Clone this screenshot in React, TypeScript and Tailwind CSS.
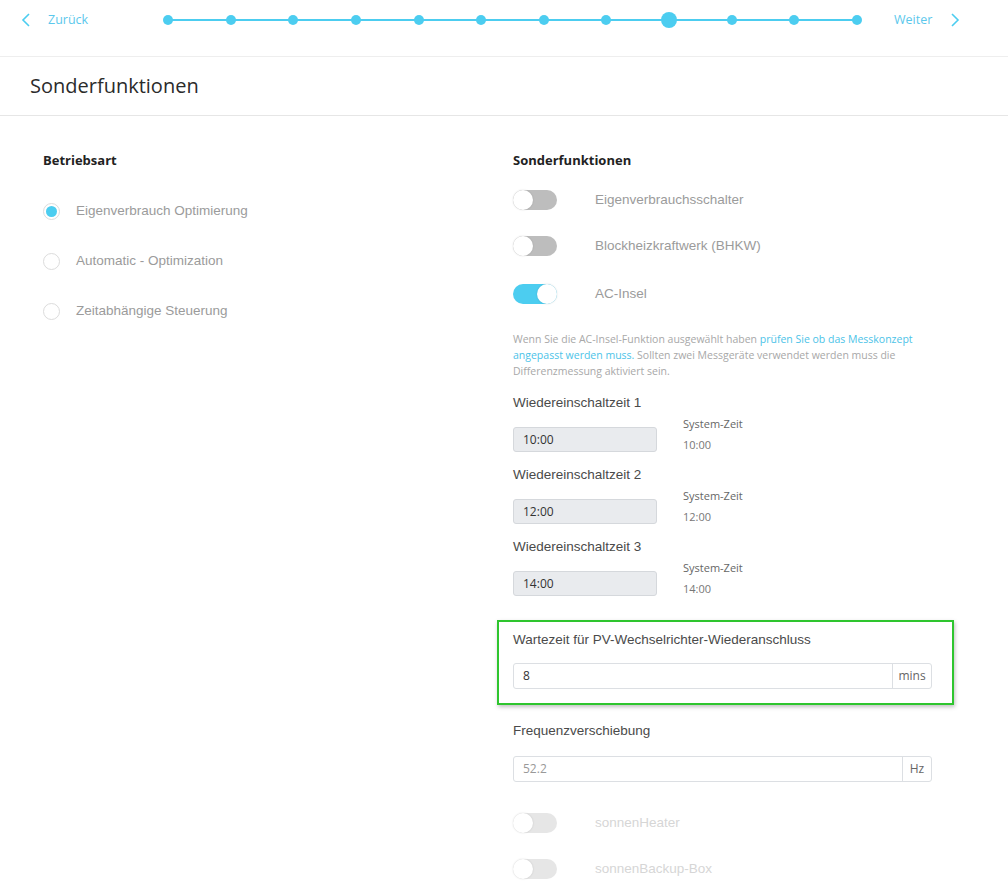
const segoe = { fontFamily: '"Open Sans", "Noto Sans", sans-serif' };
const arial = { fontFamily: '"Liberation Sans", Arial, sans-serif' };

const steps = [0, 1, 2, 3, 4, 5, 6, 7, 8, 9, 10, 11];
const current = 8;

const Toggle = ({ on = false, disabled = false }: { on?: boolean; disabled?: boolean }) => {
  const track = on ? "bg-[#4ccdf0]" : disabled ? "bg-[#e6e6e6]" : "bg-[#bdbdbd]";
  return (
    <div className={`relative flex h-[20px] w-[44px] shrink-0 items-center rounded-full ${track} ${on ? "justify-end" : "justify-start"}`}>
      <div className="h-[20px] w-[20px] rounded-full bg-white shadow-[0_0_2px_rgba(0,0,0,0.15)]" />
    </div>
  );
};

const Radio = ({ checked = false }: { checked?: boolean }) => (
  <div className="flex h-[17px] w-[17px] shrink-0 items-center justify-center rounded-full border border-[#dcdcdc] bg-white">
    {checked && <div className="h-[11px] w-[11px] rounded-full bg-[#4ccdf0]" />}
  </div>
);

const TimeRow = ({ label, value, first = false }: { label: string; value: string; first?: boolean }) => (
  <div className={first ? "mt-[14px]" : "mt-[13px]"}>
    <div className="h-[20px] text-[13.5px] leading-[20px] text-[#4a4a4a]" style={arial}>
      {label}
    </div>
    <div className="mt-[4px] flex">
      <div
        className="mt-[10px] flex h-[25px] w-[144px] items-center rounded-[3px] border border-[#d5d8dc] bg-[#e9ebee] pl-[9px] text-[12px] text-[#333]"
        style={segoe}
      >
        {value}
      </div>
      <div className="ml-[26px] text-[11px] text-[#666]" style={segoe}>
        <div className="h-[14px] leading-[14px]">System-Zeit</div>
        <div className="mt-[7px] h-[14px] leading-[14px] text-[#777]">{value}</div>
      </div>
    </div>
  </div>
);

const UnitInput = ({ value, unit, unitW, dim = false }: { value: string; unit: string; unitW: string; dim?: boolean }) => (
  <div className="flex h-[26px] w-[419px] rounded-[3px] border border-[#dcdfe3] bg-white" style={segoe}>
    <div className={`flex flex-1 items-center pl-[9px] text-[12px] ${dim ? "text-[#999]" : "text-[#333]"}`}>{value}</div>
    <div className={`flex ${unitW} items-center justify-center border-l border-[#dcdfe3] text-[12px] text-[#666]`}>{unit}</div>
  </div>
);

export default function App() {
  return (
    <div className="min-h-[887px] w-[1008px] bg-white">
      {/* top nav */}
      <div className="flex h-[57px] items-start border-b border-[#eeeeee]">
        <div className="flex h-[40px] w-[160px] items-center pl-[21px]">
          <svg width="10" height="14" viewBox="0 0 10 14" fill="none">
            <path d="M8 1L2 7l6 6" stroke="#4ccdf0" strokeWidth="1.6" />
          </svg>
          <span className="ml-[17px] text-[12.5px] text-[#5bc8ec]" style={segoe}>
            Zurück
          </span>
        </div>
        <div className="relative flex h-[40px] w-[705px] items-center justify-between">
          <div className="absolute left-[8px] right-[8px] top-[19px] h-[2px] bg-[#4ccdf0]" />
          {steps.map((s) => (
            <div key={s} className="relative flex w-[16px] justify-center">
              <div className={s === current ? "h-[16px] w-[16px] rounded-full bg-[#4ccdf0]" : "h-[10px] w-[10px] rounded-full bg-[#4ccdf0]"} />
            </div>
          ))}
        </div>
        <div className="flex h-[40px] items-center pl-[29px]">
          <span className="text-[12.5px] text-[#5bc8ec]" style={segoe}>
            Weiter
          </span>
          <svg className="ml-[18px]" width="10" height="14" viewBox="0 0 10 14" fill="none">
            <path d="M2 1l6 6-6 6" stroke="#4ccdf0" strokeWidth="1.6" />
          </svg>
        </div>
      </div>

      {/* page header */}
      <div className="flex h-[59px] items-center border-b border-[#e6e6e6] pl-[30px]">
        <h1 className="text-[20px] font-medium text-[#2b2b2b]" style={segoe}>
          Sonderfunktionen
        </h1>
      </div>

      {/* body */}
      <div className="flex pl-[43px]">
        <div className="w-[470px] pt-[34px]">
          <h3 className="h-[20px] text-[13px] font-bold leading-[20px] text-[#222]" style={segoe}>
            Betriebsart
          </h3>
          {["Eigenverbrauch Optimierung", "Automatic - Optimization", "Zeitabhängige Steuerung"].map((l, i) => (
            <div key={l} className={`flex h-[20px] items-center ${i === 0 ? "mt-[31px]" : "mt-[30px]"}`}>
              <Radio checked={i === 0} />
              <span className="ml-[16px] text-[13.5px] text-[#9b9b9b]" style={arial}>
                {l}
              </span>
            </div>
          ))}
        </div>

        <div className="w-[440px] pt-[34px]">
          <h3 className="h-[20px] text-[13px] font-bold leading-[20px] text-[#222]" style={segoe}>
            Sonderfunktionen
          </h3>
          <div className="mt-[20px] flex h-[20px] items-center">
            <Toggle />
            <span className="ml-[38px] text-[13.5px] text-[#9b9b9b]" style={arial}>Eigenverbrauchsschalter</span>
          </div>
          <div className="mt-[26px] flex h-[20px] items-center">
            <Toggle />
            <span className="ml-[38px] text-[13.5px] text-[#9b9b9b]" style={arial}>Blockheizkraftwerk (BHKW)</span>
          </div>
          <div className="mt-[28px] flex h-[20px] items-center">
            <Toggle on />
            <span className="ml-[38px] text-[13.5px] text-[#9b9b9b]" style={arial}>AC-Insel</span>
          </div>

          <p className="mt-[27px] w-[412px] text-[10.5px] leading-[16px] text-[#a8a8a8]" style={segoe}>
            Wenn Sie die AC-Insel-Funktion ausgewählt haben{" "}
            <span className="text-[#4cc3e8]">prüfen Sie ob das Messkonzept angepasst werden muss.</span> Sollten zwei
            Messgeräte verwendet werden muss die Differenzmessung aktiviert sein.
          </p>

          <TimeRow label="Wiedereinschaltzeit 1" value="10:00" first />
          <TimeRow label="Wiedereinschaltzeit 2" value="12:00" />
          <TimeRow label="Wiedereinschaltzeit 3" value="14:00" />

          <div className="-ml-[16px] mt-[24px] w-[457px] border-2 border-[#2ec52e] pb-[14px] pl-[14px] pt-[8px] shadow-[1px_2px_4px_rgba(0,0,0,0.25)]">
            <div className="h-[20px] text-[13.5px] leading-[20px] text-[#4a4a4a]" style={arial}>
              Wartezeit für PV-Wechselrichter-Wiederanschluss
            </div>
            <div className="mt-[13px]">
              <UnitInput value="8" unit="mins" unitW="w-[39px]" />
            </div>
          </div>

          <div className="mt-[16px] h-[20px] text-[13.5px] leading-[20px] text-[#4a4a4a]" style={arial}>
            Frequenzverschiebung
          </div>
          <div className="mt-[15px]">
            <UnitInput value="52.2" unit="Hz" unitW="w-[29px]" dim />
          </div>

          <div className="mt-[31px] flex h-[20px] items-center">
            <Toggle disabled />
            <span className="ml-[38px] text-[13.5px] text-[#d6d6d6]" style={arial}>sonnenHeater</span>
          </div>
          <div className="mt-[26px] flex h-[20px] items-center">
            <Toggle disabled />
            <span className="ml-[38px] text-[13.5px] text-[#d6d6d6]" style={arial}>sonnenBackup-Box</span>
          </div>
        </div>
      </div>
    </div>
  );
}
